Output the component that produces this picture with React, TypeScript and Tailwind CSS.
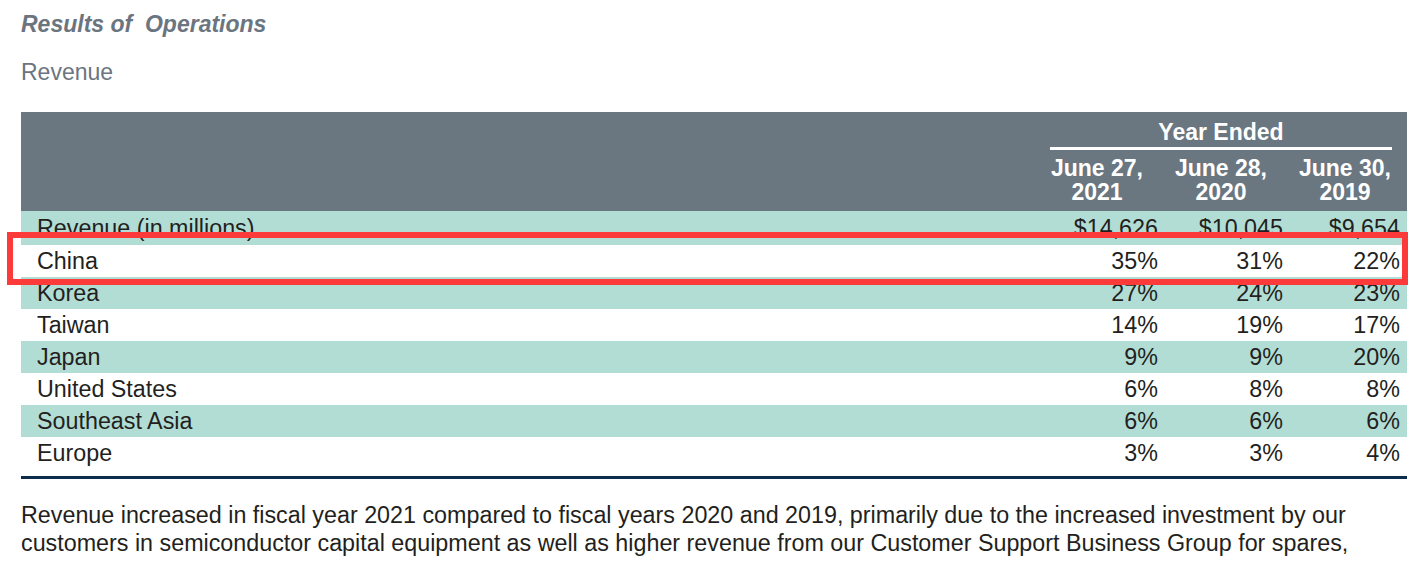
import React from "react";

const rows: { label: string; v: [string, string, string]; teal: boolean }[] = [
  { label: "Korea", v: ["27%", "24%", "23%"], teal: true },
  { label: "Taiwan", v: ["14%", "19%", "17%"], teal: false },
  { label: "Japan", v: ["9%", "9%", "20%"], teal: true },
  { label: "United States", v: ["6%", "8%", "8%"], teal: false },
  { label: "Southeast Asia", v: ["6%", "6%", "6%"], teal: true },
  { label: "Europe", v: ["3%", "3%", "4%"], teal: false },
];

function Row({ label, v, teal }: { label: string; v: [string, string, string]; teal: boolean }) {
  return (
    <div
      className={`grid grid-cols-[1fr_124px_124px_124px] h-[32px] items-center leading-[24px] text-[23.3px] ${
        teal ? "bg-[#b2ddd5]" : "bg-white"
      }`}
    >
      <div className="pl-[16px]">{label}</div>
      <div className="text-right pr-[1px]">{v[0]}</div>
      <div className="text-right pr-0">{v[1]}</div>
      <div className="text-right pr-[7px]">{v[2]}</div>
    </div>
  );
}

export default function App() {
  return (
    <div
      className="w-[1418px] h-[568px] overflow-hidden bg-white text-[23px] text-[#231f20] pl-[21px]"
      style={{ fontFamily: '"Liberation Sans", Arial, sans-serif' }}
    >
      <div className="pt-[10px] leading-[28px] font-bold italic text-[#6b7580] whitespace-pre">
        Results of  Operations
      </div>
      <div className="mt-[20px] leading-[28px] text-[#6b7580]">Revenue</div>

      <div className="mt-[26px] w-[1386px]">
        {/* Header */}
        <div className="bg-[#6a7781] text-white font-bold pt-[8px] pb-[7px] grid grid-cols-[1fr_124px_124px_124px]">
          <div />
          <div className="col-span-3 flex flex-col">
            <div className="text-center leading-[24px] h-[24px]">Year Ended</div>
            <div className="mt-[3px] h-[3px] bg-white mx-[15px]" />
            <div className="mt-[6px] grid grid-cols-3 leading-[24px] text-center">
              <div>
                June 27,
                <br />
                2021
              </div>
              <div>
                June 28,
                <br />
                2020
              </div>
              <div>
                June 30,
                <br />
                2019
              </div>
            </div>
          </div>
        </div>

        {/* Revenue row (partially covered) */}
        <div className="grid grid-cols-[1fr_124px_124px_124px] h-[34px] overflow-hidden bg-[#b2ddd5] pt-[6px] leading-[23px] text-[23.3px]">
          <div className="pl-[16px]">Revenue (in millions)</div>
          <div className="text-right pr-[1px]">$14,626</div>
          <div className="text-right pr-0">$10,045</div>
          <div className="text-right pr-[7px]">$9,654</div>
        </div>

        {/* China row highlighted */}
        <div className="relative">
          <Row label="China" v={["35%", "31%", "22%"]} teal={false} />
          <div className="absolute left-[-14px] right-[-1px] top-[-13px] bottom-[-8px] border-[6px] border-[#fd3a3a] pointer-events-none" />
        </div>

        {rows.map((r) => (
          <Row key={r.label} {...r} />
        ))}
        <div className="h-[7px] bg-white" />
        <div className="h-[3px] bg-[#0d2b4b]" />
      </div>

      <p className="mt-[22px] w-[1386px] leading-[28px] text-[23.3px]">
        Revenue increased in fiscal year 2021 compared to fiscal years 2020 and 2019, primarily due to the increased
        investment by our customers in semiconductor capital equipment as well as higher revenue from our Customer Support
        Business Group for spares,
      </p>
    </div>
  );
}
